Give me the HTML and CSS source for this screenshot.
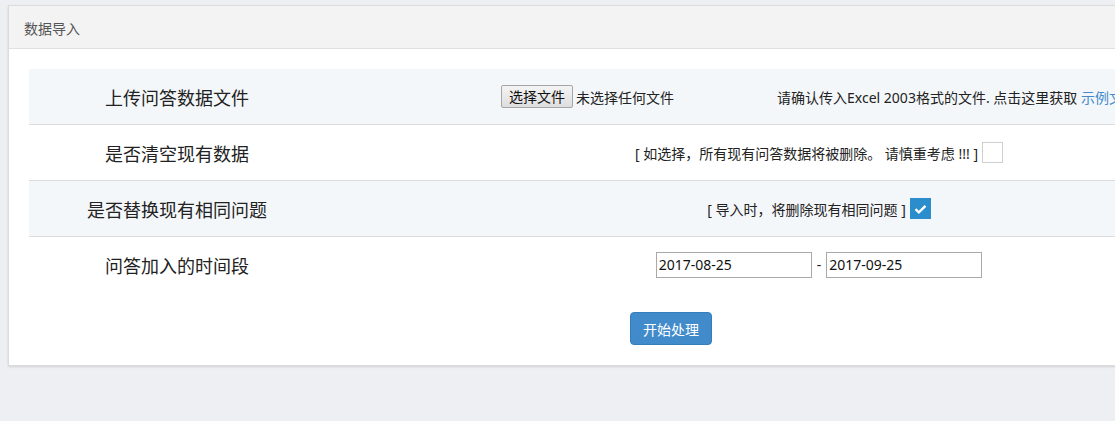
FILE: index.html
```html
<!DOCTYPE html>
<html lang="zh-CN">
<head>
<meta charset="utf-8">
<title>数据导入</title>
<link rel="stylesheet" href="styles.css">
</head>
<body>
<div class="panel">
  <div class="panel-heading">数据导入</div>
  <div class="panel-body">
    <div class="form-table">
      <div class="row shaded">
        <div class="label">上传问答数据文件</div>
        <div class="cell">
          <span class="file-btn">选择文件</span><span class="file-name">未选择任何文件</span>
          <span class="hint">请确认传入Excel 2003格式的文件. 点击这里获取 <a class="link" href="#">示例文件</a></span>
        </div>
      </div>
      <div class="row">
        <div class="label">是否清空现有数据</div>
        <div class="cell">
          <span>[ 如选择，所有现有问答数据将被删除。 请慎重考虑 !!! ]</span><span class="check"></span>
        </div>
      </div>
      <div class="row shaded">
        <div class="label">是否替换现有相同问题</div>
        <div class="cell">
          <span>[ 导入时，将删除现有相同问题 ]</span><span class="check checked"><svg width="13" height="10" viewBox="0 0 13 10"><path d="M1.5 5.2 L4.8 8.3 L11.5 1.8" fill="none" stroke="#fff" stroke-width="2.4"/></svg></span>
        </div>
      </div>
      <div class="row last">
        <div class="label">问答加入的时间段</div>
        <div class="cell">
          <input class="date" type="text" value="2017-08-25"><span class="dash">-</span><input class="date" type="text" value="2017-09-25">
        </div>
      </div>
    </div>
    <div class="actions">
      <button class="btn-primary" type="button">开始处理</button>
    </div>
  </div>
</div>
</body>
</html>
```

FILE: styles.css
```css
html, body {
  overflow: hidden;
}
body {
  margin: 0;
  padding: 5px 0 0 8px;
  background: #eeeff3;
  font-family: "Noto Sans", "Noto Sans CJK SC", sans-serif;
  font-size: 14px;
  color: #222;
  height: 421px;
  box-sizing: border-box;
}
.panel {
  width: 1324px;
  background: #fff;
  border: 1px solid #dcdcdc;
  box-shadow: 0 1px 2px rgba(0,0,0,0.12);
}
.panel-heading {
  height: 42px;
  line-height: 46px;
  background: #f3f3f3;
  border-bottom: 1px solid #e0e0e0;
  padding-left: 15px;
  color: #555;
  font-size: 14px;
}
.panel-body {
  padding: 20px;
}
.form-table {
  display: flex;
  flex-direction: column;
}
.row {
  display: flex;
  align-items: center;
  height: 55px;
  border-bottom: 1px solid #dcdcdc;
}
.row.last {
  border-bottom: none;
}
.row.shaded {
  background: #f4f7fa;
}
.label {
  width: 296px;
  flex: none;
  text-align: center;
  font-size: 18px;
  color: #222;
}
.cell {
  flex: 1;
  display: flex;
  align-items: center;
  justify-content: center;
}
.file-btn {
  display: inline-block;
  height: 21px;
  line-height: 21px;
  padding: 0 7px;
  border: 1px solid #a6a6a6;
  border-radius: 2px;
  background: linear-gradient(#f4f4f4, #dedede);
  font-size: 14px;
  color: #111;
}
.file-name {
  margin-left: 3px;
}
.hint {
  margin-left: 103px;
}
.link {
  color: #428bca;
  text-decoration: none;
}
.check {
  display: inline-flex;
  align-items: center;
  justify-content: center;
  width: 19px;
  height: 19px;
  border: 1px solid #cfcfcf;
  background: #fff;
  margin-left: 4px;
}
.check.checked {
  background: #2b8dcc;
  border-color: #2b8dcc;
}
.date {
  width: 150px;
  height: 20px;
  padding: 2px 2px;
  border: 1px solid #a9a9a9;
  font-family: "Noto Sans", sans-serif;
  font-size: 14px;
  color: #111;
  margin: 0;
}
.dash {
  margin: 0 5px;
}
.actions {
  display: flex;
  justify-content: center;
  padding-top: 20px;
}
.btn-primary {
  width: 82px;
  height: 33px;
  background: #428bca;
  border: 1px solid #357ebd;
  border-radius: 4px;
  color: #fff;
  font-family: "Noto Sans", "Noto Sans CJK SC", sans-serif;
  font-size: 14px;
  padding: 0;
}
```
